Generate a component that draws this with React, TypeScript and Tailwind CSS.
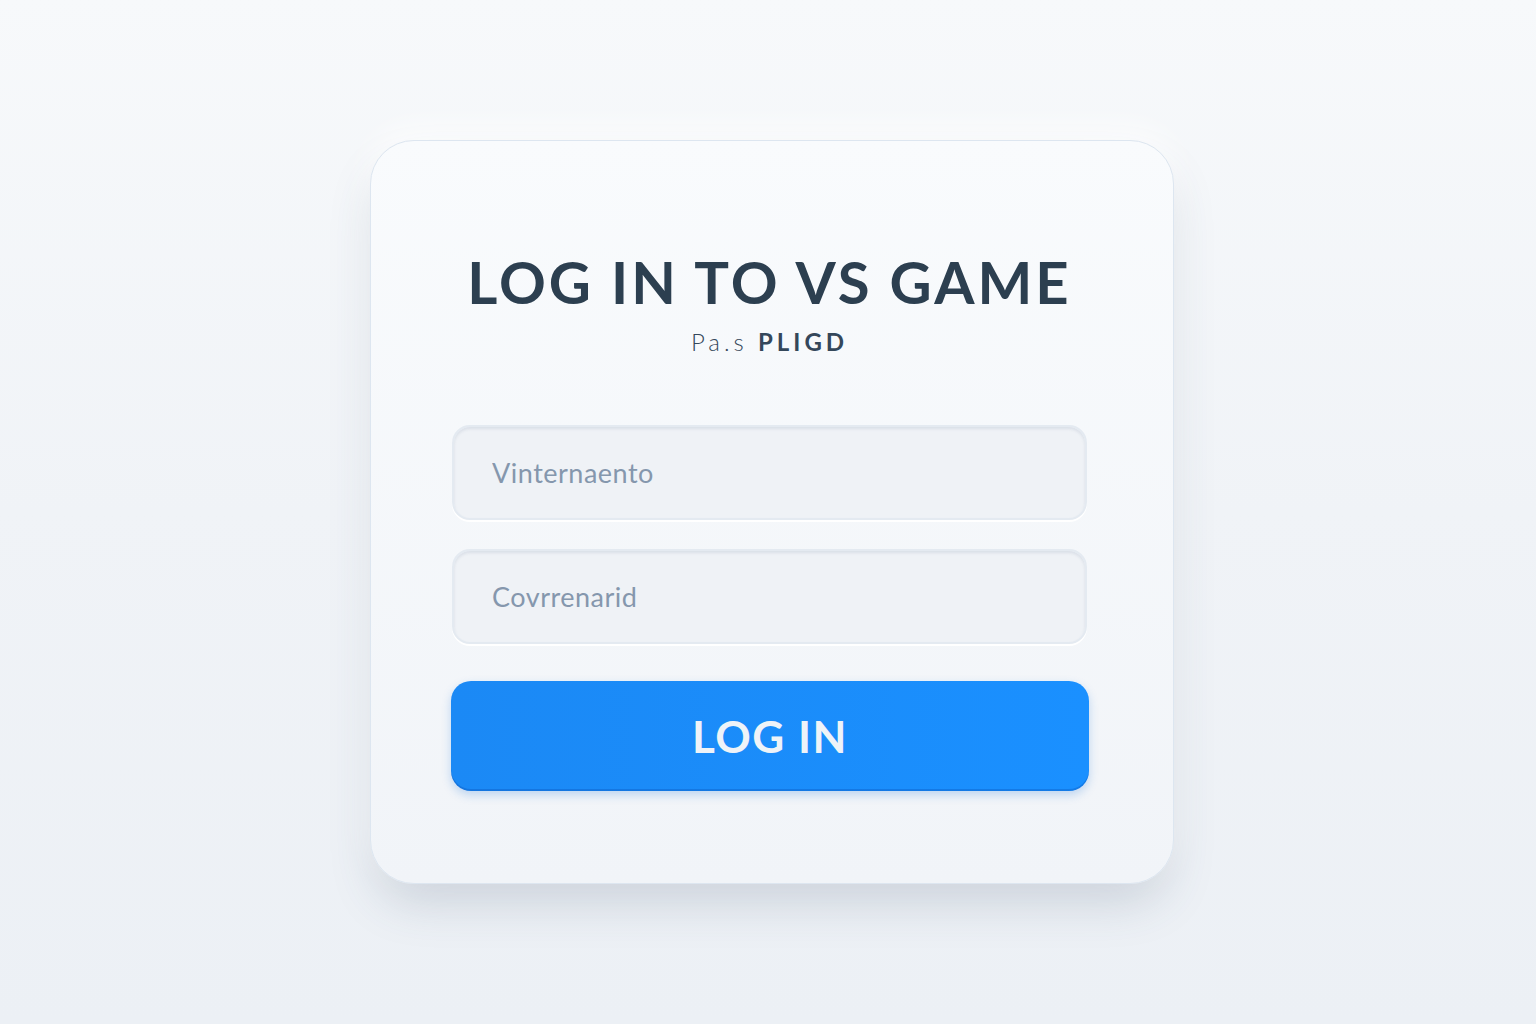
import { useState } from 'react'

export default function App() {
  const [user, setUser] = useState('')
  const [pass, setPass] = useState('')

  return (
    <div className="flex min-h-screen w-full items-start justify-center bg-gradient-to-b from-[#f7f9fb] via-[#f0f3f7] to-[#ecf0f5] pt-[140px] font-['Lato','Liberation_Sans',sans-serif]">
      <div className="ml-[8px] flex h-[744px] w-[804px] flex-col items-center rounded-[44px] border border-[#dde6f0] bg-gradient-to-b from-[#f9fbfd] to-[#f1f4f8] pl-[81px] pr-[86px] pt-[110px] shadow-[0_24px_50px_-10px_rgba(60,80,110,0.22),0_-10px_30px_rgba(255,255,255,0.9)]">
        {/* Heading */}
        <h1 className="text-[58px] font-bold leading-[62px] tracking-[3px] text-[#2c3f50]">
          LOG IN TO VS GAME
        </h1>
        <p className="mt-[16px] text-[24px] leading-[26px] tracking-[4px] text-[#34475a]">
          <span className="font-light">Pa.s</span> <span className="font-bold">PLIGD</span>
        </p>

        {/* Fields */}
        <form className="mt-[70px] flex w-full flex-col" onSubmit={e => e.preventDefault()}>
          <input
            value={user}
            onChange={e => setUser(e.target.value)}
            placeholder="Vinternaento"
            className="h-[95px] w-full rounded-[18px] border-2 border-[#e4eaf1] bg-[#eff2f6] px-[38px] text-[27px] tracking-[0.5px] text-[#4b5b6d] shadow-[inset_0_2px_3px_rgba(120,140,165,0.18),0_2px_0_#ffffff] outline-none placeholder:text-[#8597ad]"
          />
          <input
            value={pass}
            onChange={e => setPass(e.target.value)}
            type="password"
            placeholder="Covrrenarid"
            className="mt-[29px] h-[95px] w-full rounded-[18px] border-2 border-[#e4eaf1] bg-[#eff2f6] px-[38px] text-[27px] tracking-[0.5px] text-[#4b5b6d] shadow-[inset_0_2px_3px_rgba(120,140,165,0.18),0_2px_0_#ffffff] outline-none placeholder:text-[#8597ad]"
          />
          <button
            type="submit"
            className="mt-[37px] h-[110px] w-[calc(100%+3px)] -ml-px rounded-[20px] bg-gradient-to-r from-[#1b89f5] to-[#1a90ff] text-[44px] font-bold tracking-[1.5px] text-[#eef3f8] shadow-[0_4px_10px_rgba(30,120,220,0.25),inset_0_-2px_0_rgba(0,60,160,0.25)]"
          >
            LOG IN
          </button>
        </form>
      </div>
    </div>
  )
}
